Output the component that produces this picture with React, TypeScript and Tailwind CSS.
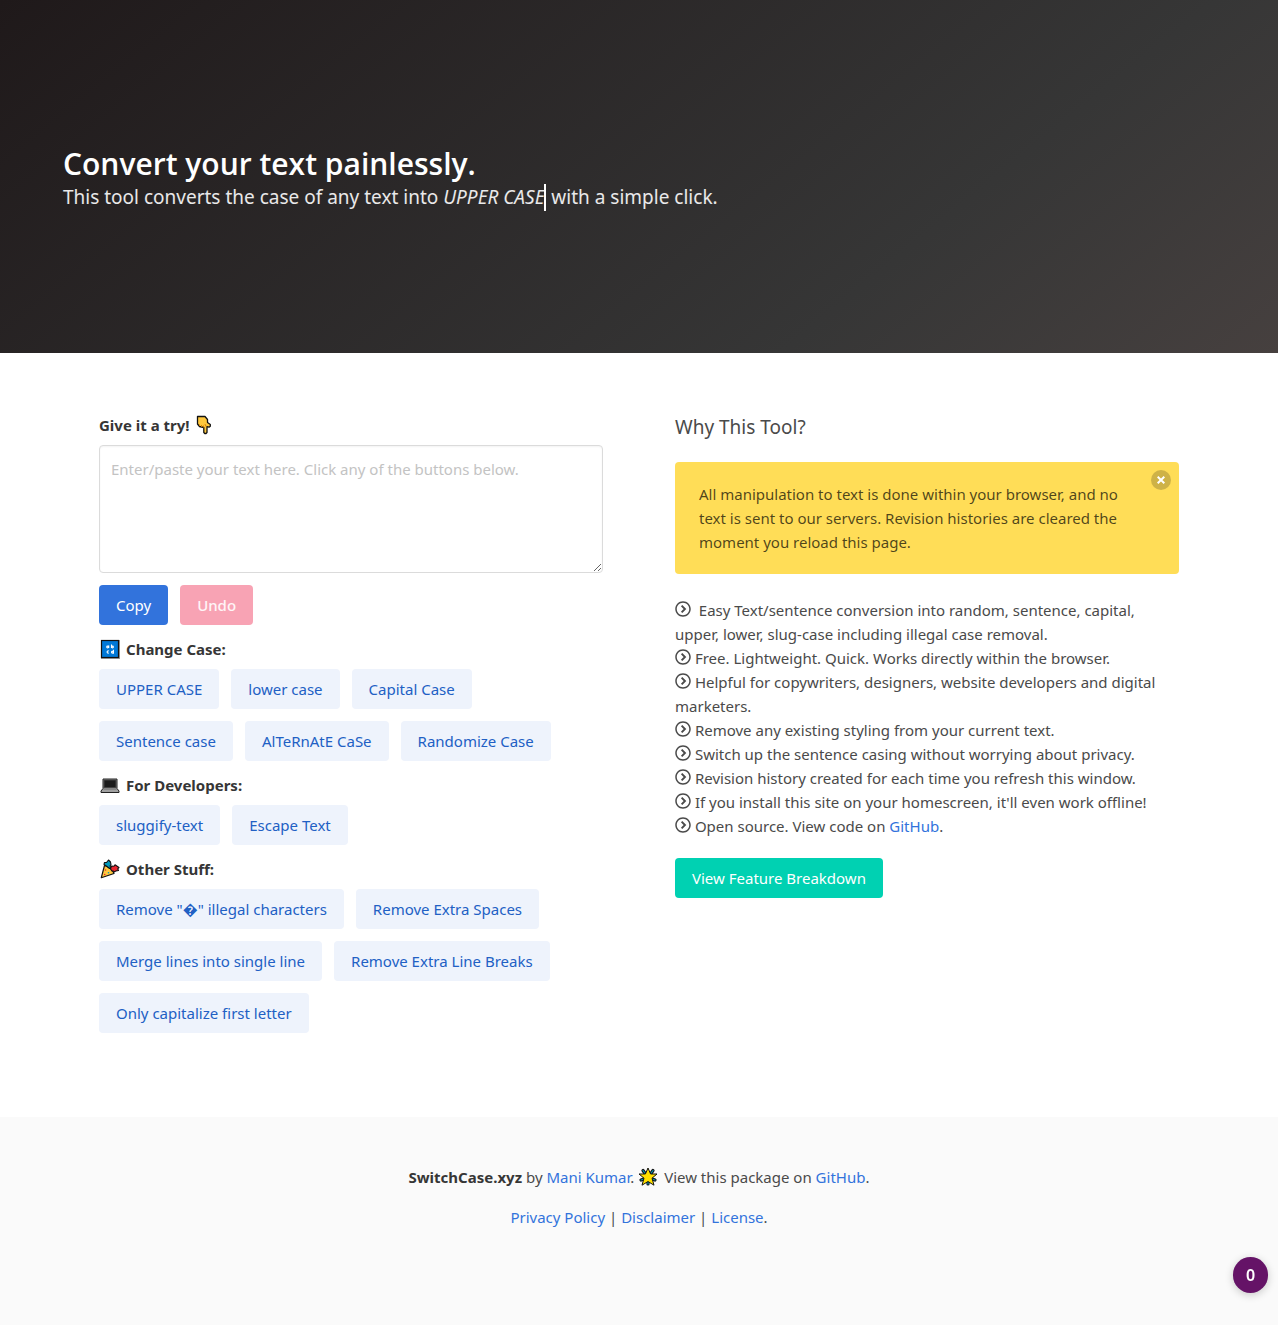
import type { ReactNode } from 'react';

function PointDownIcon() {
  return (
    <svg className="ml-0.5 inline-block h-5 w-5 align-text-bottom" viewBox="0 0 20 20" aria-hidden="true">
      <path
        d="M2.500 1.500h7.500L12.500 4.500v3l2.800 2v1.700l-1.300 1-2-.7v6l-1 1h-1.200l-1-1v-5L4.500 11.500 2.500 9z"
        fill="#ffc83d"
        stroke="#111"
        strokeWidth="1.300"
        strokeLinejoin="round"
      />
      <path d="M4.500 11v-1.500M6.500 12v-2M8.500 12.500v-2M11 11.500 10 9" stroke="#d67d00" strokeWidth="0.900" fill="none" />
    </svg>
  );
}

function LettersIcon() {
  return (
    <svg className="h-5 w-5" viewBox="0 0 20 20" aria-hidden="true">
      <rect x="1" y="1" width="19" height="19" fill="#999" />
      <rect x="1.500" y="1.500" width="17" height="17" fill="#0078d7" stroke="#111" strokeWidth="1.200" />
      <g fill="none" stroke="#fff" strokeWidth="1.100">
        <circle cx="7.600" cy="8" r="0.900" />
        <path d="M8.700 6.500v2.500M11.500 5.500v3.500" />
        <circle cx="12.500" cy="8" r="0.900" />
        <path d="M8.800 12.100a1.100 1.100 0 1 0 0 1.800M13.400 10.700v4" />
        <circle cx="12.400" cy="13.200" r="0.900" />
      </g>
    </svg>
  );
}

function LaptopIcon() {
  return (
    <svg className="h-5 w-5" viewBox="0 0 20 20" aria-hidden="true">
      <path d="M3 4h14v9.500l2 2.500v1.500H1V16l2-2.500z" fill="#a0a0a0" stroke="#222" strokeWidth="1" strokeLinejoin="round" />
      <rect x="4" y="5" width="12" height="7.500" fill="#1c1c1c" stroke="#444" strokeWidth="1" />
      <path d="M3.500 14h13" stroke="#666" strokeWidth="0.900" />
    </svg>
  );
}

function PartyIcon() {
  return (
    <svg className="h-5 w-5" viewBox="0 0 20 20" aria-hidden="true">
      <path d="M4.500 6.500 1.300 18.700 14 14.500q-2-6-9.500-8z" fill="#ffc83d" stroke="#111" strokeWidth="1.200" strokeLinejoin="round" />
      <path d="M7 7.500 4 5.500 4.500 3.500 6.500 3.500 8.500 1l2 2 .5 2.500-1 1.500 1 1.500-1.500 1z" fill="#0099bc" stroke="#111" strokeWidth="1.100" strokeLinejoin="round" />
      <path d="M10.500 10 11.500 7l2.500.3 1-1.500 1.800 1.200 2.200 1.500-1.300 1.300.8 1.700-2.500.400-1.500 1-1.500-1-.7.500z" fill="#e8252f" stroke="#111" strokeWidth="1.100" strokeLinejoin="round" />
      <circle cx="5.500" cy="11" r="0.800" fill="#e8252f" />
      <circle cx="8.500" cy="13.800" r="0.800" fill="#0099bc" />
      <circle cx="4.700" cy="15.500" r="0.800" fill="#e8252f" />
    </svg>
  );
}

function StarIcon() {
  return (
    <svg className="mr-0.5 inline-block h-5 w-5 align-text-bottom" viewBox="0 0 20 20" aria-hidden="true">
      <g stroke="#111" strokeWidth="3.200" strokeLinecap="round">
        <path d="M10 10.500 5 3.500M10 10.500l5-7M10 10.500 3 13M10 10.500l7 2.500M10 10.500v6.500" />
      </g>
      <g stroke="#0099bc" strokeWidth="1.200" strokeLinecap="round">
        <path d="M10 10.500 5 3.500M10 10.500l5-7M10 10.500 3 13M10 10.500l7 2.500M10 10.500v6.500" />
      </g>
      <path
        d="m10 1 2.600 6H19l-5 4.200 2 7L10 14.500l-6 3.700 2-7L1 7h6.400z"
        fill="#ffe000"
        stroke="#111"
        strokeWidth="1"
        strokeLinejoin="round"
      />
    </svg>
  );
}

function ChevronCircle() {
  return (
    <svg className="-mt-1.5 inline-block h-4 w-4 align-middle" viewBox="0 0 512 512" fill="currentColor" aria-hidden="true">
      <path d="M256 8C119 8 8 119 8 256s111 248 248 248 248-111 248-248S393 8 256 8zm0 448c-110.500 0-200-89.500-200-200S145.500 56 256 56s200 89.500 200 200-89.500 200-200 200z" />
      <path d="M212 150 318 256 212 362" fill="none" stroke="currentColor" strokeWidth="62" />
    </svg>
  );
}

const caseLabels = ['UPPER CASE', 'lower case', 'Capital Case', 'Sentence case', 'AlTeRnAtE CaSe', 'Randomize Case'];
const developerLabels = ['sluggify-text', 'Escape Text'];
const otherLabels = [
  'Remove "\uFFFD" illegal characters',
  'Remove Extra Spaces',
  'Merge lines into single line',
  'Remove Extra Line Breaks',
  'Only capitalize first letter',
];

const features: ReactNode[] = [
  <>&nbsp;Easy Text/sentence conversion into random, sentence, capital, upper, lower, slug-case including illegal case removal.</>,
  'Free. Lightweight. Quick. Works directly within the browser.',
  'Helpful for copywriters, designers, website developers and digital marketers.',
  'Remove any existing styling from your current text.',
  'Switch up the sentence casing without worrying about privacy.',
  'Revision history created for each time you refresh this window.',
  "If you install this site on your homescreen, it'll even work offline!",
  <>Open source. View code on <Link>GitHub</Link>.</>,
];

function Link({ children }: { children: ReactNode }) {
  return (
    <a href="#" className="text-[#3273dc] hover:text-[#363636]">
      {children}
    </a>
  );
}

function ButtonGroup({ icon, title, labels }: { icon: ReactNode; title: string; labels: string[] }) {
  return (
    <section className="mt-3">
      <h2 className="flex items-center gap-1.5 pl-px font-bold text-[#363636]">
        {icon}
        {title}
      </h2>
      <div className="mt-2 flex flex-wrap gap-3">
        {labels.map((label) => (
          <button key={label} type="button" className="h-10 rounded bg-[#eef3fc] px-[17px] text-[#2160c4]">
            {label}
          </button>
        ))}
      </div>
    </section>
  );
}

export default function App() {
  return (
    <div className="bg-white font-['Noto_Sans','Open_Sans',sans-serif] text-[15px] leading-6 text-[#4a4a4a]">
      <header className="bg-[linear-gradient(141deg,#1f191a_0%,#363636_71%,#46403f_100%)] px-6 pt-[146px] pb-[142px]">
        <div className="mx-auto max-w-[1152px]">
          <h1 className="font-['Open_Sans','Noto_Sans',sans-serif] text-[30px] leading-9 font-semibold text-white">
            Convert your text painlessly.
          </h1>
          <p className="mt-0.5 text-[19px] leading-[27px] text-white/90">
            This tool converts the case of any text into{' '}
            <em className="inline-block border-r-2 border-white">UPPER CASE</em> with a simple click.
          </p>
        </div>
      </header>

      <main className="mx-auto grid max-w-[1152px] grid-cols-1 pt-[60px] pb-[84px] md:grid-cols-2">
        <div className="px-9">
          <label htmlFor="source" className="block font-bold text-[#363636]">
            Give it a try! <PointDownIcon />
          </label>
          <textarea
            id="source"
            placeholder="Enter/paste your text here. Click any of the buttons below."
            className="mt-2 block h-32 w-full resize rounded border border-[#dbdbdb] px-[11px] py-[11px] shadow-[inset_0_1px_2px_rgba(10,10,10,0.05)] placeholder:text-[#c3c3c3]"
          />
          <div className="mt-3 flex gap-3">
            <button type="button" className="h-10 rounded bg-[#3273dc] px-[17px] text-white">
              Copy
            </button>
            <button type="button" disabled className="h-10 rounded bg-[#f8a3b4] px-[17px] font-medium text-white/90">
              Undo
            </button>
          </div>
          <ButtonGroup icon={<LettersIcon />} title="Change Case:" labels={caseLabels} />
          <ButtonGroup icon={<LaptopIcon />} title="For Developers:" labels={developerLabels} />
          <ButtonGroup icon={<PartyIcon />} title="Other Stuff:" labels={otherLabels} />
        </div>

        <div className="px-9">
          <h2 className="text-[19px] leading-7">Why This Tool?</h2>
          <div className="relative mt-[21px] rounded bg-[#ffdd57] py-5 pr-10 pl-6 text-black/70">
            All manipulation to text is done within your browser, and no text is sent to our servers. Revision histories
            are cleared the moment you reload this page.
            <button
              type="button"
              aria-label="Dismiss"
              className="absolute top-2 right-2 flex h-5 w-5 items-center justify-center rounded-full bg-[#0a0a0a]/20"
            >
              <svg className="h-2 w-2" viewBox="0 0 8 8" stroke="#fff" strokeWidth="2" aria-hidden="true">
                <path d="M0.700 0.700 7.300 7.300M7.300 0.700 0.700 7.300" />
              </svg>
            </button>
          </div>
          <ul className="mt-6">
            {features.map((item, i) => (
              <li key={i}>
                <ChevronCircle /> {item}
              </li>
            ))}
          </ul>
          <button type="button" className="mt-5 h-10 rounded bg-[#00d1b2] px-[17px] text-white">
            View Feature Breakdown
          </button>
        </div>
      </main>

      <footer className="bg-[#fafafa] px-6 pt-12 pb-24 text-center">
        <p>
          <strong className="font-bold text-[#363636]">SwitchCase.xyz</strong> by <Link>Mani Kumar</Link>. <StarIcon />{' '}
          View this package on <Link>GitHub</Link>.
        </p>
        <p className="mt-4">
          <Link>Privacy Policy</Link> | <Link>Disclaimer</Link> | <Link>License</Link>.
        </p>
      </footer>

      <button
        type="button"
        className="fixed right-2.5 bottom-8 h-9 w-[35px] rounded-full bg-[#651367] text-base font-semibold text-white shadow-[0_2px_8px_rgba(0,0,0,0.2)]"
      >
        0
      </button>
    </div>
  );
}
